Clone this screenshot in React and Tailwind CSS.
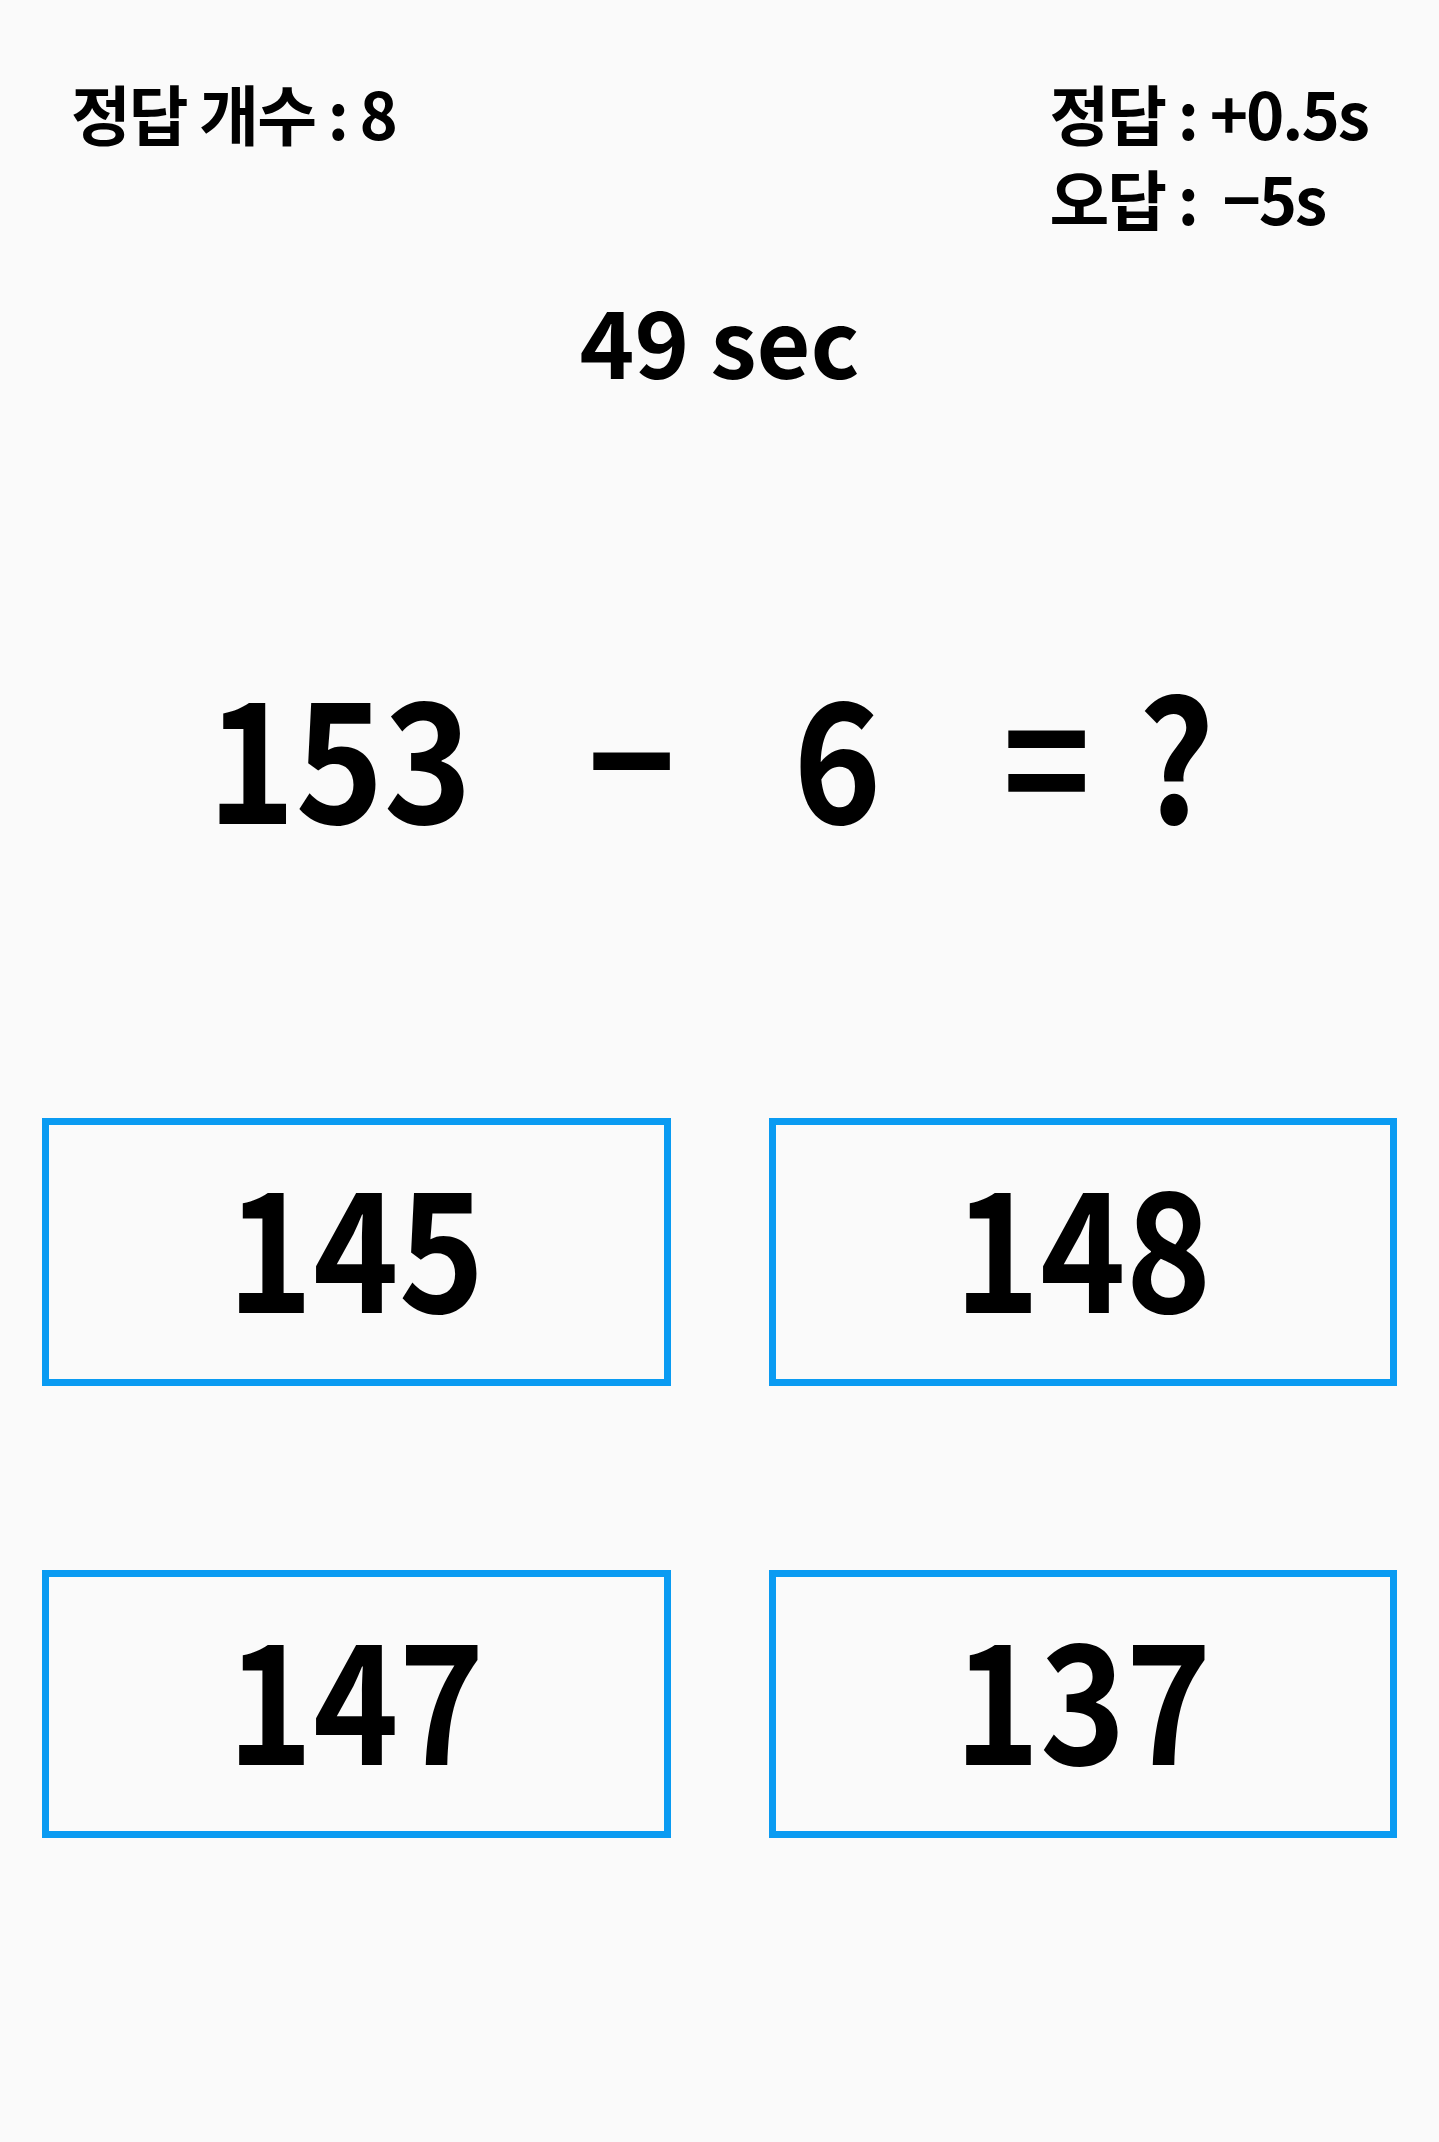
import React from "react";

const choices = ["145", "148", "147", "137"];

export default function App() {
  return (
    <div className="min-h-[2142px] w-full overflow-hidden bg-[#fafafa] font-['Noto_Sans_CJK_KR',sans-serif] font-bold text-black">
      {/* Header */}
      <div className="flex justify-between px-[71px] pt-[70px] text-[65px] leading-[85px] tracking-[-2px]">
        <div>정답 개수 : 8</div>
        <div className="whitespace-pre">
          <div>정답 : +0.5s</div>
          <div>오답 :  −5s</div>
        </div>
      </div>

      {/* Timer */}
      <div className="mt-[52px] text-center text-[93px] leading-none">49 sec</div>

      {/* Question */}
      <div className="mt-[282px] flex scale-x-[0.89] items-center justify-center pr-[19px] text-[168px] leading-none">
        <span>153</span>
        <span className="ml-[130px]">−</span>
        <span className="ml-[132px]">6</span>
        <span className="ml-[136px]">=</span>
        <span className="ml-[53px]">?</span>
      </div>

      {/* Answers */}
      <div className="mt-[283px] grid grid-cols-2 gap-x-[98px] gap-y-[184px] px-[42px]">
        {choices.map((c) => (
          <button
            key={c}
            className="flex h-[268px] items-center justify-center border-[7px] border-[#0a9bf2] pb-[22px] text-[166px] leading-none"
          >
            <span className="scale-x-[0.875]">{c}</span>
          </button>
        ))}
      </div>
    </div>
  );
}
